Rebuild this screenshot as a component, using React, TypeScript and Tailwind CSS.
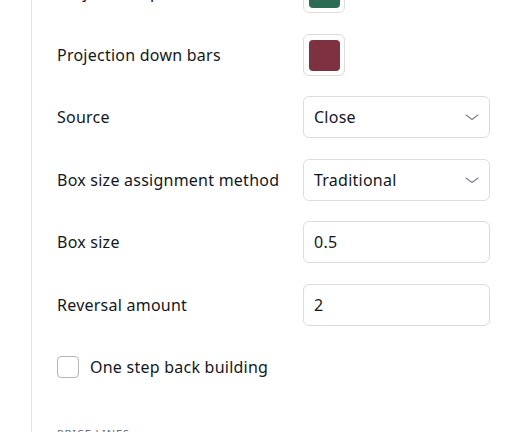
const font = { fontFamily: '"Noto Sans", "Liberation Sans", sans-serif' };

function Swatch({ color }: { color: string }) {
  return (
    <div className="w-[42px] h-[42px] rounded-[6px] border border-[#dcdcdc] flex items-center justify-center">
      <div className="w-[31px] h-[31px] rounded-[4px]" style={{ backgroundColor: color }} />
    </div>
  );
}

function Chevron() {
  return (
    <svg width="14" height="8" viewBox="0 0 14 8" fill="none" className="text-[#7b7e88]">
      <path d="M1 2l6 4.5 6-4.5" stroke="currentColor" strokeWidth="1.1" strokeLinecap="round" strokeLinejoin="round" />
    </svg>
  );
}

function Select({ value }: { value: string }) {
  return (
    <div className="w-[187px] h-[42px] rounded-[6px] border border-[#dcdcdc] flex items-center justify-between pl-[10px] pr-[10px]">
      <span className="text-[16px] tracking-[0.015em] text-[#131722]">{value}</span>
      <Chevron />
    </div>
  );
}

function Input({ value }: { value: string }) {
  return (
    <div className="w-[187px] h-[42px] rounded-[6px] border border-[#dcdcdc] flex items-center pl-[10px]">
      <span className="text-[16px] tracking-[0.015em] text-[#131722]">{value}</span>
    </div>
  );
}

function Row({ label, children, className }: { label: string; children: React.ReactNode; className?: string }) {
  return (
    <div className={"flex items-center h-[42px] " + (className ?? "")}>
      <span className="w-[246px] text-[16px] tracking-[0.015em] text-[#131722]">{label}</span>
      {children}
    </div>
  );
}

export default function App() {
  return (
    <div className="w-[507px] h-[432px] overflow-hidden bg-white pl-[31px]" style={font}>
      <div className="h-full flex flex-col border-l border-[#e0e3eb] pl-[25px]">
        <div className="flex flex-col -mt-[29px]">
          <Row label="Projection up bars">
            <Swatch color="#2e6b55" />
          </Row>
          <Row label="Projection down bars" className="mt-[21px]">
            <Swatch color="#7e3141" />
          </Row>
          <Row label="Source" className="mt-[20px]">
            <Select value="Close" />
          </Row>
          <Row label="Box size assignment method" className="mt-[21px]">
            <Select value="Traditional" />
          </Row>
          <Row label="Box size" className="mt-[20px]">
            <Input value="0.5" />
          </Row>
          <Row label="Reversal amount" className="mt-[21px]">
            <Input value="2" />
          </Row>
          <div className="flex items-center h-[42px] mt-[20px]">
            <div className="w-[22px] h-[22px] rounded-[4px] border border-[#b2b5be]" />
            <span className="ml-[11px] text-[16px] tracking-[0.015em] text-[#131722]">One step back building</span>
          </div>
          <div className="mt-[38px] text-[11px] tracking-[0.08em] text-[#6a6d78] uppercase">Price lines</div>
        </div>
      </div>
    </div>
  );
}
